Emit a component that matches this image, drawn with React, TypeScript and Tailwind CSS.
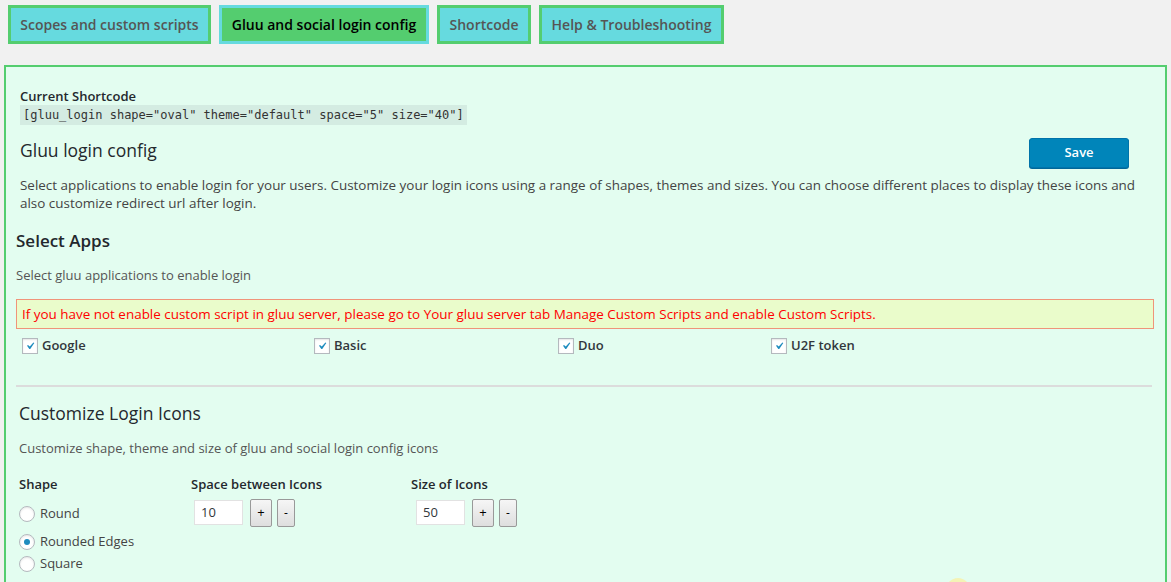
import React from "react";

const font = { fontFamily: '"Open Sans", "Noto Sans", sans-serif' };

function Check({ label }: { label: string }) {
  return (
    <div className="flex items-center gap-[4px]">
      <span className="w-[16px] h-[16px] bg-white border border-[#b4b9be] shadow-[inset_0_1px_2px_rgba(0,0,0,0.1)] flex items-center justify-center">
        <svg width="16" height="16" viewBox="0 0 20 20">
          <path d="M14.83 4.89l1.34.94-5.81 8.38H9.02L5.78 9.67l1.34-1.25 2.57 2.4z" fill="#1e8cbe" />
        </svg>
      </span>
      <span className="text-[13px] font-semibold text-[#32373c]">{label}</span>
    </div>
  );
}

function Radio({ label, checked }: { label: string; checked?: boolean }) {
  return (
    <div className="flex items-center gap-[5px] h-[22px]">
      <span className="w-[16px] h-[16px] rounded-full bg-white border border-[#b4b9be] shadow-[inset_0_1px_2px_rgba(0,0,0,0.1)] flex items-center justify-center">
        {checked && <span className="w-[6px] h-[6px] rounded-full bg-[#1e8cbe]" />}
      </span>
      <span className="text-[13px] text-[#444]">{label}</span>
    </div>
  );
}

function Stepper({ value }: { value: string }) {
  return (
    <div className="flex items-center">
      <div className="w-[49px] h-[25px] bg-white border border-[#e2e2e2] flex items-center pl-[6px] text-[13px] text-[#32373c]">
        {value}
      </div>
      <div className="ml-[7px] w-[22px] h-[28px] border border-[#999] rounded-[2px] bg-gradient-to-b from-[#f6f6f6] to-[#dedede] flex items-center justify-center text-[13px] text-black">
        +
      </div>
      <div className="ml-[5px] w-[18px] h-[28px] border border-[#999] rounded-[2px] bg-gradient-to-b from-[#f6f6f6] to-[#dedede] flex items-center justify-center text-[12px] text-black">
        -
      </div>
    </div>
  );
}

export default function App() {
  return (
    <div className="relative w-[1171px] h-[582px] overflow-hidden bg-[#f1f1f1]" style={font}>
      {/* Tabs */}
      <div className="flex gap-[8px] pl-[8px] pt-[5px]">
        <div className="w-[203px] h-[39px] flex items-center justify-center whitespace-nowrap bg-[#66dadf] border-[3px] border-[#54cd6f] text-[14px] font-semibold text-[#555]">
          Scopes and custom scripts
        </div>
        <div className="w-[210px] h-[39px] flex items-center justify-center whitespace-nowrap bg-[#54cd6f] border-[3px] border-[#66dadf] text-[14px] font-semibold text-[#000]">
          Gluu and social login config
        </div>
        <div className="w-[94px] h-[39px] flex items-center justify-center whitespace-nowrap bg-[#66dadf] border-[3px] border-[#54cd6f] text-[14px] font-semibold text-[#555]">
          Shortcode
        </div>
        <div className="w-[185px] h-[39px] flex items-center justify-center whitespace-nowrap bg-[#66dadf] border-[3px] border-[#54cd6f] text-[14px] font-semibold text-[#555]">
          Help &amp; Troubleshooting
        </div>
      </div>

      {/* Panel */}
      <div className="mt-[21px] ml-[4px] w-[1163px] h-[540px] bg-[#e3fdf0] border-2 border-[#54cd6f] pl-[10px] pr-[11px] pt-[20px]">
        <div className="pl-[4px]">
          <div className="text-[13px] font-semibold text-[#23282d] leading-[18px]">Current Shortcode</div>
          <div className="w-fit h-[20px] bg-[#d4ece2] pl-[3px] pr-[3px] text-[#333] leading-[20px]" style={{ fontFamily: '"DejaVu Sans Mono", "Liberation Mono", monospace', fontSize: "12px" }}>
            [gluu_login shape="oval" theme="default" space="5" size="40"]
          </div>
          <div className="flex items-start justify-between mt-[13px]">
            <div className="text-[17.5px] text-[#23282d] leading-[24px]">Gluu login config</div>
            <div className="mr-[25px] w-[100px] h-[30px] bg-[#0085ba] border border-[#0073aa] rounded-[3px] shadow-[0_1px_0_#006799] flex items-center justify-center text-white text-[13px] font-semibold">
              Save
            </div>
          </div>
          <p className="mt-[8px] text-[13.45px] leading-[18px] text-[#444] pr-[18px]">
            Select applications to enable login for your users. Customize your login icons using a range of shapes, themes and sizes. You can choose different places to display these icons and also customize redirect url after login.
          </p>
        </div>

        <div className="mt-[17px] text-[17px] font-semibold text-[#23282d] leading-[24px]">Select Apps</div>
        <div className="mt-[13px] text-[13px] text-[#555] leading-[18px]">Select gluu applications to enable login</div>

        <div className="mt-[15px] h-[30px] border border-[#f0947a] bg-[#eafccb] flex items-center pl-[5px] text-[13.45px] text-[#ff0000]">
          If you have not enable custom script in gluu server, please go to Your gluu server tab Manage Custom Scripts and enable Custom Scripts.
        </div>

        <div className="flex mt-[7px] pl-[6px]">
          <div className="w-[292px]"><Check label="Google" /></div>
          <div className="w-[244px]"><Check label="Basic" /></div>
          <div className="w-[213px]"><Check label="Duo" /></div>
          <div><Check label="U2F token" /></div>
        </div>

        <div className="mt-[29px] mr-[2px] h-[2px] bg-[#dcdcdc]" />

        <div className="pl-[3px]">
          <div className="mt-[14px] text-[17.5px] text-[#23282d] leading-[24px]">Customize Login Icons</div>
          <div className="mt-[14px] text-[13px] text-[#555] leading-[18px]">Customize shape, theme and size of gluu and social login config icons</div>

          <div className="flex mt-[18px]">
            <div className="w-[172px]">
              <div className="text-[13px] font-semibold text-[#23282d] leading-[18px]">Shape</div>
              <div className="mt-[10px]"><Radio label="Round" /></div>
              <div className="mt-[6px]"><Radio label="Rounded Edges" checked /></div>
              <div><Radio label="Square" /></div>
            </div>
            <div className="w-[220px]">
              <div className="text-[13px] font-semibold text-[#23282d] leading-[18px]">Space between Icons</div>
              <div className="mt-[6px] pl-[3px]"><Stepper value="10" /></div>
            </div>
            <div>
              <div className="text-[13px] font-semibold text-[#23282d] leading-[18px]">Size of Icons</div>
              <div className="mt-[6px] pl-[5px]"><Stepper value="50" /></div>
            </div>
          </div>
        </div>
      </div>

      <div className="absolute left-[946px] top-[578px] w-[24px] h-[24px] rounded-full bg-[#f8f0a6] opacity-80" />
    </div>
  );
}
